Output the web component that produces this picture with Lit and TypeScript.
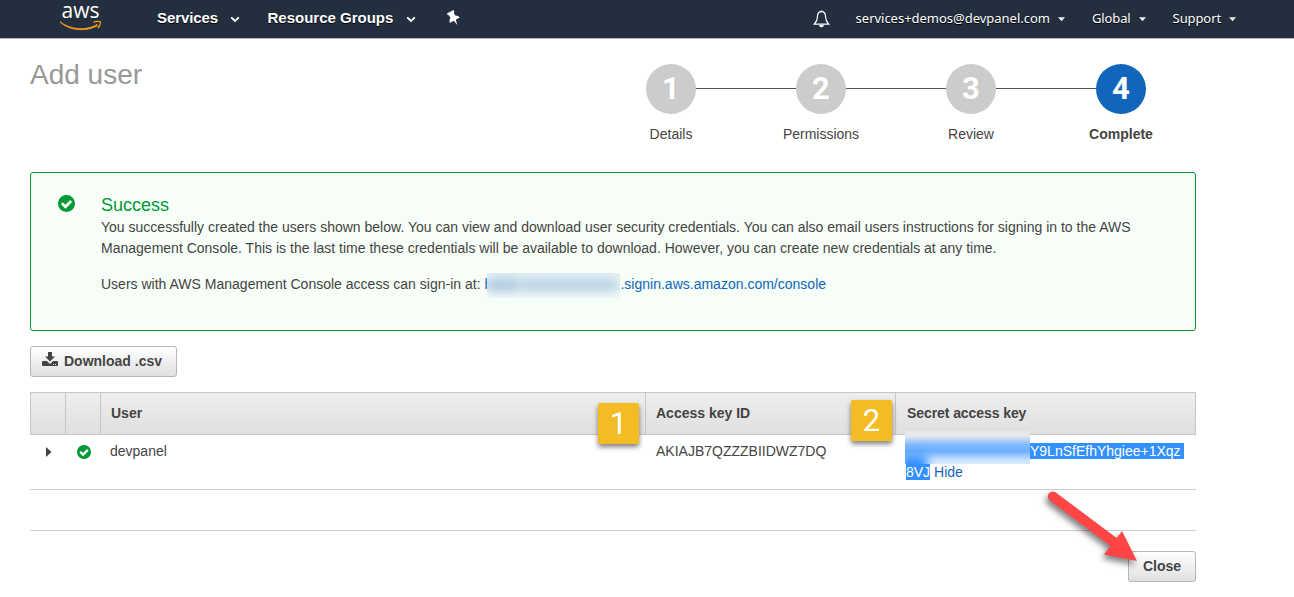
import { LitElement, html, css } from "lit";
import { customElement } from "lit/decorators.js";
import { classMap } from "lit/directives/class-map.js";

const check = html`<svg class="check" viewBox="0 0 16 16">
  <circle cx="8" cy="8" r="8" fill="#009933"></circle>
  <path d="M3.6 7.8 L7 11 L12.4 5.6" fill="none" stroke="#fff" stroke-width="2.7"></path>
</svg>`;

const chevron = html`<svg class="chevron" viewBox="0 0 10 7"><path d="M1.2 1.3 L5 5 L8.8 1.3" fill="none" stroke="#fff" stroke-width="1.8"></path></svg>`;
const caret = html`<svg class="caret" viewBox="0 0 7 5"><path d="M0 0.3 H7 L3.5 4.3 Z" fill="#eee"></path></svg>`;

@customElement("console-header")
export class ConsoleHeader extends LitElement {
  static styles = css`
    :host { display: block; }
    .bar { box-sizing: border-box; height: 39px; background: #232f3e; border-bottom: 1px solid #b9b9bd;
      display: flex; align-items: flex-start; color: #fff; }
    .logo { width: 44px; height: 34px; margin: 0 0 0 59px; flex: none; overflow: visible; }
    .main { display: flex; align-items: center; height: 36px; margin-left: 54px; white-space: nowrap;
      font: bold 15px/36px "Liberation Sans", Arial, sans-serif; text-shadow: 0 1px 0 #000; }
    .main-label-a { width: 73px; letter-spacing: -.1px; } .main-label-b { width: 138px; }
    .chev-a { display: flex; width: 37.5px; }
    .chev-b { display: flex; width: 10px; }
    .chevron { width: 10px; height: 7px; margin-top: 2px; }
    .pin { width: 15px; height: 16px; margin-left: 30px; }
    .side { margin-left: auto; margin-right: 58px; height: 36px; display: flex; align-items: center;
      font: 13px/36px "Noto Sans", sans-serif; color: #fff; text-shadow: 0 1px 0 #000; white-space: nowrap; }
    .bell { width: 17px; height: 18px; margin: 1px 26px 0 0; }
    .caret { width: 7px; height: 5px; margin: 2px 0 0 8px; }
    .item { display: flex; align-items: center; margin-left: 27px; letter-spacing: -.1px; }
    .item.first { margin-left: 0; letter-spacing: -.02px; }
  `;
  render() {
    return html`<header class="bar">
      <svg class="logo" viewBox="0 0 44 34">
        <text x="2.5" y="18.4" textLength="38" lengthAdjust="spacingAndGlyphs" font-family="Open Sans, sans-serif" font-weight="500" font-size="22" fill="#fff">aws</text>
        <path d="M1 21.8 C11 29.8 28 31 38 24.6 L38.8 25.4 C28 32 10 31 1 21.8 Z" fill="#f79a1c" stroke="#f79a1c" stroke-width=".9"></path>
        <path d="M34.5 22.4 C37 21.2 40.5 21.1 41.3 21.8 C41.8 23.3 40.5 26.4 38.8 28" fill="none" stroke="#f79a1c" stroke-width="1.4"></path>
      </svg>
      <nav class="main">
        <span class="main-label-a">Services</span><span class="chev-a">${chevron}</span>
        <span class="main-label-b">Resource Groups</span><span class="chev-b">${chevron}</span>
        <svg class="pin" viewBox="0 0 15 16"><path transform="rotate(-28 7.5 8)" fill="#fff" d="M3.8 1 H11.2 V3.3 H10.2 V6.5 Q13 7.8 13.2 10.6 H8.7 L7.6 16 L6.5 10.6 H1.8 Q2 7.8 4.8 6.5 V3.3 H3.8 Z"></path></svg>
      </nav>
      <div class="side">
        <svg class="bell" viewBox="0 0 17 18">
          <path d="M8.5 1.7 C5.5 1.7 4.4 4 4.4 7 C4.4 11 3.2 12 1.2 14.2 H15.8 C13.8 12 12.6 11 12.6 7 C12.6 4 11.5 1.7 8.5 1.7 Z" fill="none" stroke="#fff" stroke-width="1.2"></path>
          <path d="M6 15 H11 Q10.5 17.4 8.5 17.4 Q6.5 17.4 6 15 Z M7.6 0.4 H9.4 V2 H7.6 Z" fill="#fff"></path>
        </svg>
        <span class="item first">services+demos@devpanel.com${caret}</span>
        <span class="item">Global${caret}</span>
        <span class="item">Support${caret}</span>
      </div>
    </header>`;
  }
}

@customElement("wizard-steps")
export class WizardSteps extends LitElement {
  static styles = css`
    :host { display: block; }
    .steps { display: grid; grid-template-columns: repeat(4, 150px); }
    .step { display: flex; flex-direction: column; text-align: center; color: #444; }
    .track { display: grid; grid-template-columns: 1fr 50px 1fr; align-items: center; }
    .line { height: 1px; margin-bottom: 2px; background: #555; }
    .line.off { background: transparent; }
    .dot { height: 50px; border-radius: 50%; background: #ccc; color: #fff; font: bold 31px/49px Roboto, Arial, sans-serif; }
    .dot.current { background: #1166bb; }
    .name { margin-top: 11px; font-size: 14px; line-height: 18px; }
    .name.current { font-weight: bold; }
  `;
  steps = ["Details", "Permissions", "Review", "Complete"];
  render() {
    const last = this.steps.length - 1;
    return html`<div class="steps">${this.steps.map((s, i) => html`<div class="step">
      <div class="track">
        <span class=${classMap({ line: true, off: i === 0 })}></span>
        <span class=${classMap({ dot: true, current: i === last })}>${i + 1}</span>
        <span class=${classMap({ line: true, off: i === last })}></span>
      </div>
      <span class=${classMap({ name: true, current: i === last })}>${s}</span>
    </div>`)}</div>`;
  }
}

@customElement("app-root")
export class AppRoot extends LitElement {
  static styles = css`
    :host { display: block; position: relative; width: 1294px; height: 597px; overflow: hidden; background: #fff;
      font: 14px/21px "Liberation Sans", Arial, sans-serif; color: #444; }
    .page { width: 1166px; margin-left: 30px; }
    .top { display: flex; justify-content: space-between; height: 133px; }
    .title { margin: 19px 0 0; font-size: 28px; line-height: 34px; font-weight: normal; color: #999; }
    .steps { margin: 25px 0 0; }
    .alert { box-sizing: border-box; height: 159px; border: 1px solid #009933; border-radius: 3px; background: #f6fef7;
      display: flex; padding: 22px 20px 0 27px; }
    .check { display: block; }
    .alert .check { width: 17px; height: 17px; flex: none; margin: 0 26px 0 0; }
    .alert-title { margin: 0; color: #009933; font-size: 18px; line-height: 20px; font-weight: normal; }
    .para { margin: 2px 0 0; line-height: 21px; letter-spacing: .006px; }
    .para.second { margin-top: 15px; }
    .link { color: #1166bb; }
    .redacted-url { position: relative; display: inline-block; width: 136px; height: 21px; vertical-align: top; }
    .url-cover { position: absolute; left: 3px; top: -1px; width: 133px; height: 25px; overflow: hidden; background: linear-gradient(#e6f1f2, #e6f1f3 60%, #f3faf7); }
    .smudge { position: absolute; left: 0; top: 7px; width: 32px; height: 10px; background: #91b4da; filter: blur(6px); opacity: .85; }
    .smudge.wide { left: 34px; width: 96px; opacity: .65; }
    .button { box-sizing: border-box; height: 31px; border: 1px solid #b7b7b7; border-radius: 3px; background: linear-gradient(#fff, #e0e0e0);
      font: bold 14px/27px "Liberation Sans", Arial, sans-serif; color: #444; padding: 0; display: flex; align-items: center; }
    .download { width: 147px; margin-top: 15px; padding-left: 11px; }
    .download-icon { width: 16px; height: 15px; margin: -4px 6px 0 0; }
    .table { margin-top: 15px; }
    .row { display: grid; grid-template-columns: 35px 35px 545px 250px 1fr; }
    .head { box-sizing: border-box; height: 43px; border: 1px solid #c6c6c6; background: linear-gradient(#eee, #dfdfdf);
      grid-template-columns: 35px 35px 545px 250px 1fr; }
    .th { border-right: 1px solid #c6c6c6; padding-left: 10px; line-height: 41px; font-weight: bold; }
    .th.last { border-right: 0; padding-left: 11px; letter-spacing: -.08px; }
    .body { height: 54px; border-bottom: 1px solid #ccc; }
    .td { padding: 6px 0 0 10px; }
    .td.shift { padding-left: 11px; }
    .body .check { width: 14px; height: 14px; margin: 4px 0 0 1px; }
    .expander { width: 6px; height: 10px; margin: 6px 0 0 6px; display: block; }
    .empty { height: 40px; border-bottom: 1px solid #ccc; }
    .secret { position: relative; padding: 6px 0 0 11px; }
    .selected { background: #3390ff; color: #fff; }
    .full { display: block; width: 278px; height: 16px; line-height: 16px; margin: 2px 0 3px; }
    .key-tail { display: block; padding-left: 124px; }
    .key-cover { position: absolute; left: 10px; top: -4px; width: 125px; height: 33px; overflow: hidden;
      background: linear-gradient(#e6e8ea 15%, #7fb8fd 42%, #6fb0ff 62%, #c3defe 86%, #dcebfd); }
    .haze { position: absolute; top: 24px; left: -4px; width: 26px; height: 20px; background: #3390ff; filter: blur(5px); }
    .footer { display: flex; justify-content: flex-end; margin-top: 20px; }
    .close { width: 68px; justify-content: center; }
    .badge { position: absolute; width: 41px; height: 41px; border-radius: 2px; background: #f4bc22; color: #fff;
      font: 31px/41px Roboto, Arial, sans-serif; text-align: center; box-shadow: 0 3px 5px rgba(0,0,0,.5); }
    .badge.one { left: 598px; top: 403px; }
    .badge.two { left: 851px; top: 400px; }
    .arrow { position: absolute; left: 1030px; top: 480px; width: 130px; height: 100px; filter: drop-shadow(-2px 4px 3px rgba(0,0,0,.5)); }
  `;
  render() {
    return html`
      <console-header></console-header>
      <main class="page">
        <div class="top"><h1 class="title">Add user</h1><wizard-steps class="steps"></wizard-steps></div>
        <section class="alert">
          ${check}
          <div>
            <h2 class="alert-title">Success</h2>
            <p class="para">You successfully created the users shown below. You can view and download user security credentials. You can also email users instructions for signing in to the AWS<br>Management Console. This is the last time these credentials will be available to download. However, you can create new credentials at any time.</p>
            <p class="para second">Users with AWS Management Console access can sign-in at: <span class="link"><span class="redacted-url">h<span class="url-cover"><span class="smudge"></span><span class="smudge wide"></span></span></span>.signin.aws.amazon.com/console</span></p>
          </div>
        </section>
        <button class="button download">
          <svg class="download-icon" viewBox="0 0 16 15"><path fill="#444" d="M6 0 H10 V4.5 H13 L8 9.5 L3 4.5 H6 Z M1 9 H4.8 L8 12 L11.2 9 H15 Q16 9 16 10 V13 Q16 14 15 14 H1 Q0 14 0 13 V10 Q0 9 1 9 Z"></path><path stroke="#eee" d="M11 12.5 H12 M13 12.5 H14"></path></svg>
          Download .csv
        </button>
        <section class="table">
          <div class="row head"><span class="th"></span><span class="th"></span><span class="th">User</span><span class="th">Access key ID</span><span class="th last">Secret access key</span></div>
          <div class="row body">
            <div class="td"><svg class="expander" viewBox="0 0 6 10"><path d="M0 0 L5.5 5 L0 10 Z" fill="#444"></path></svg></div>
            <div class="td shift">${check}</div>
            <div class="td">devpanel</div>
            <div class="td shift">AKIAJB7QZZZBIIDWZ7DQ</div>
            <div class="secret">
              <span class="selected full"><span class="key-tail">Y9LnSfEfhYhgiee+1Xqz</span></span>
              <span class="selected">8VJ</span> <span class="link">Hide</span>
              <span class="key-cover"><span class="haze"></span></span>
            </div>
          </div>
          <div class="empty"></div>
        </section>
        <div class="footer"><button class="button close">Close</button></div>
      </main>
      <span class="badge one">1</span>
      <span class="badge two">2</span>
      <svg class="arrow" viewBox="0 0 130 100">
        <path d="M22.8 16.5 L85 63" stroke="#ff4545" stroke-width="10" stroke-linecap="round"></path>
        <path d="M92 51 L107 81 L74 74.5 Z" fill="#ff4545"></path>
      </svg>`;
  }
}
